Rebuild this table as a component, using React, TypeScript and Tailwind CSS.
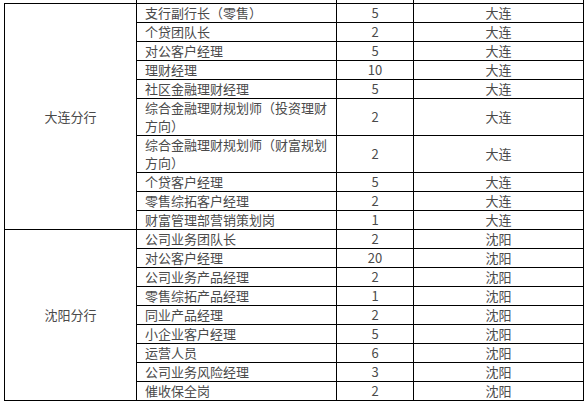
import React from "react";

type Row = { title: React.ReactNode; num: string; city: string; double?: boolean };

const dalian: Row[] = [
  { title: "支行副行长（零售）", num: "5", city: "大连" },
  { title: "个贷团队长", num: "2", city: "大连" },
  { title: "对公客户经理", num: "5", city: "大连" },
  { title: "理财经理", num: "10", city: "大连" },
  { title: "社区金融理财经理", num: "5", city: "大连" },
  {
    title: (
      <>
        综合金融理财规划师（投资理财
        <br />
        方向）
      </>
    ),
    num: "2",
    city: "大连",
    double: true,
  },
  {
    title: (
      <>
        综合金融理财规划师（财富规划
        <br />
        方向）
      </>
    ),
    num: "2",
    city: "大连",
    double: true,
  },
  { title: "个贷客户经理", num: "5", city: "大连" },
  { title: "零售综拓客户经理", num: "2", city: "大连" },
  { title: "财富管理部营销策划岗", num: "1", city: "大连" },
];

const shenyang: Row[] = [
  { title: "公司业务团队长", num: "2", city: "沈阳" },
  { title: "对公客户经理", num: "20", city: "沈阳" },
  { title: "公司业务产品经理", num: "2", city: "沈阳" },
  { title: "零售综拓产品经理", num: "1", city: "沈阳" },
  { title: "同业产品经理", num: "2", city: "沈阳" },
  { title: "小企业客户经理", num: "5", city: "沈阳" },
  { title: "运营人员", num: "6", city: "沈阳" },
  { title: "公司业务风险经理", num: "3", city: "沈阳" },
  { title: "催收保全岗", num: "2", city: "沈阳" },
];

function Group({ name, rows }: { name: string; rows: Row[] }) {
  return (
    <div className="flex">
      <div className="w-[133px] shrink-0 border-l border-r border-b border-black flex items-center justify-center">
        {name}
      </div>
      <div className="flex flex-col">
        {rows.map((r, i) => (
          <div
            key={i}
            className={`grid grid-cols-[200px_77px_170px] border-b border-black ${
              r.double ? "h-[37px]" : "h-[19px]"
            }`}
          >
            <div className="border-r border-black pl-2 flex items-center whitespace-nowrap">
              <div>{r.title}</div>
            </div>
            <div className="border-r border-black flex items-center justify-center">{r.num}</div>
            <div className="border-r border-black flex items-center justify-center">{r.city}</div>
          </div>
        ))}
      </div>
    </div>
  );
}

export default function App() {
  return (
    <div
      className="w-[587px] h-[404px] bg-white text-[13px] leading-[18px] text-[#4a4a4a] overflow-hidden"
      style={{ fontFamily: '"Noto Sans CJK SC", "Noto Sans", sans-serif' }}
    >
      <div className="ml-[4px] h-[3px] grid grid-cols-[133px_200px_77px_170px]">
        <div className="border-r border-black" />
        <div className="border-r border-black" />
        <div className="border-r border-black" />
        <div className="border-r border-black" />
      </div>
      <div className="ml-[4px] w-[580px] border-t border-black">
        <Group name="大连分行" rows={dalian} />
        <Group name="沈阳分行" rows={shenyang} />
      </div>
    </div>
  );
}
